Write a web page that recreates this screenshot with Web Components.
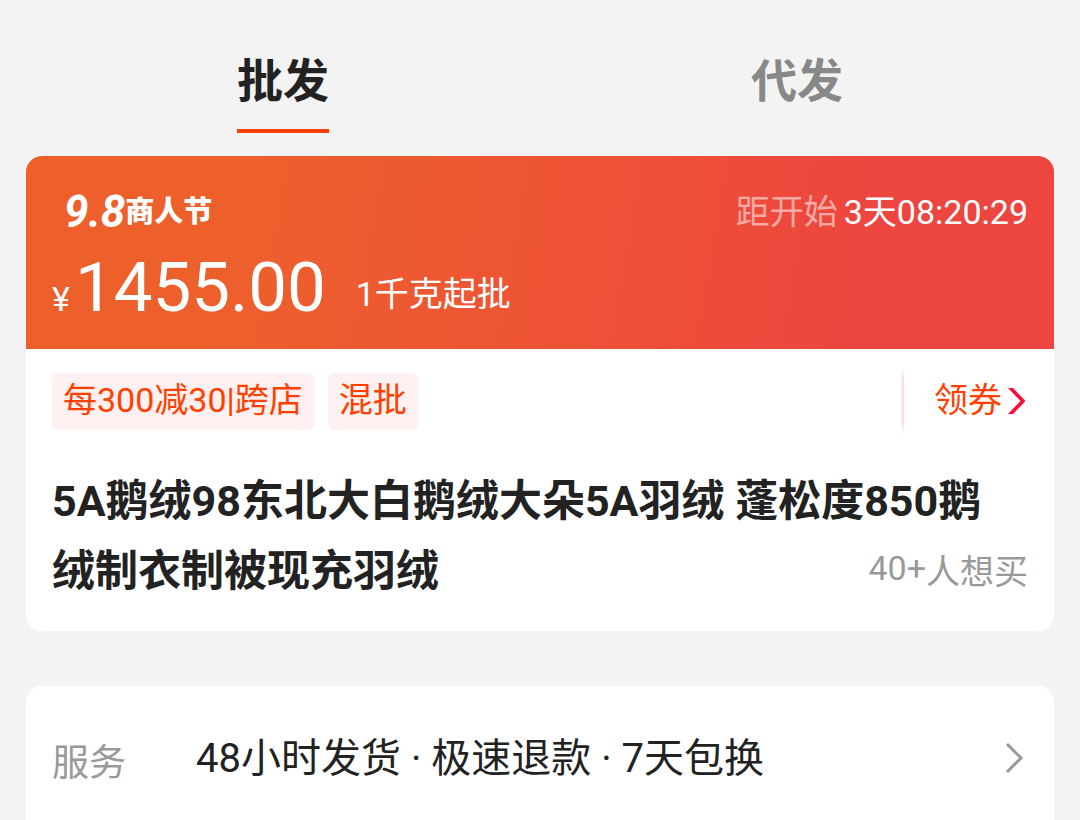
<!DOCTYPE html>
<html lang="zh-CN">
<head>
<meta charset="utf-8">
<meta name="viewport" content="width=device-width, initial-scale=1">
<title>商品详情</title>
<style>
  body { margin: 0; background: #f3f3f3; color: #222; font-family: Roboto, "Noto Sans CJK SC", sans-serif; }
</style>
</head>
<body>
<product-page>
  <trade-tabs slot="tabs">
    <trade-tab active>批发</trade-tab>
    <trade-tab>代发</trade-tab>
  </trade-tabs>
  <offer-card slot="offer">
    <price-banner slot="banner">
      <promo-logo slot="logo"><span slot="date">9.8</span>商人节</promo-logo>
      <count-down slot="timer" label="距开始">3天08:20:29</count-down>
      <span slot="price">1455.00</span>
      <span slot="minimum">1千克起批</span>
    </price-banner>
    <promo-tag slot="tags">每300减30|跨店</promo-tag>
    <promo-tag slot="tags">混批</promo-tag>
    <coupon-link slot="coupon">领券</coupon-link>
    <span slot="title">5A鹅绒98东北大白鹅绒大朵5A羽绒 蓬松度850鹅绒制衣制被现充羽绒</span>
    <want-count slot="want" count="40+">人想买</want-count>
  </offer-card>
  <service-row slot="service" label="服务">48小时发货 · 极速退款 · 7天包换</service-row>
</product-page>

<script>
  const define = (name, html) => customElements.define(name, class extends HTMLElement {
    constructor() {
      super();
      const template = document.createElement('template');
      template.innerHTML = html;
      this.attachShadow({ mode: 'open' }).append(template.content.cloneNode(true));
      for (const node of this.shadowRoot.querySelectorAll('[data-attr]')) {
        node.textContent = this.getAttribute(node.dataset.attr);
      }
    }
  });

  define('product-page', `
    <style>
      :host { display: block; }
      main { display: flex; flex-direction: column; box-sizing: border-box; min-height: 100vh; padding: 0 26px; }
      .service { flex: 1; display: flex; margin-top: 55px; }
      .service ::slotted(*) { flex: 1; }
    </style>
    <main>
      <slot name="tabs"></slot>
      <slot name="offer"></slot>
      <div class="service"><slot name="service"></slot></div>
    </main>`);

  define('trade-tabs', `
    <style>
      :host { display: block; }
      nav { display: grid; grid-template-columns: 1fr 1fr; justify-items: center; padding: 51px 0 23px; }
    </style>
    <nav><slot></slot></nav>`);

  define('trade-tab', `
    <style>
      :host { display: block; }
      button { display: block; border: 0; border-bottom: 4px solid transparent; padding: 0 0 18px; background: none;
        font: bold 46px/60px Roboto, "Noto Sans CJK SC", sans-serif; color: #888; cursor: pointer; }
      :host([active]) button { color: #222; border-color: #ff4000; }
    </style>
    <button type="button"><slot></slot></button>`);

  define('offer-card', `
    <style>
      :host { display: block; background: #fff; border-radius: 16px; overflow: hidden; }
      .promos { display: flex; align-items: center; gap: 14px; padding: 17px 26px 0; }
      .coupon { margin-left: auto; }
      .heading { display: flow-root; padding: 30px 26px 25px; }
      /* Keeps the want count beside the title's second line. */
      .heading::before { content: ""; float: right; width: 20px; height: 82px; }
      .want { float: right; clear: right; }
      h1 { margin: 0; font-size: 43px; line-height: 70px; font-weight: bold; }
    </style>
    <slot name="banner"></slot>
    <div class="promos"><slot name="tags"></slot><div class="coupon"><slot name="coupon"></slot></div></div>
    <div class="heading">
      <div class="want"><slot name="want"></slot></div>
      <h1><slot name="title"></slot></h1>
    </div>`);

  define('price-banner', `
    <style>
      :host { display: block; padding: 32px 26px 21px; color: #fff;
        background: linear-gradient(100deg, #ed602c 20%, #ed5235 54%, #ed4540 82%); }
      .top { display: flex; justify-content: space-between; align-items: center; }
      .bottom { display: flex; align-items: flex-end; gap: 30px; margin-top: 12px; }
      .price { display: flex; align-items: baseline; gap: 5px; font-size: 69px; line-height: 80px; }
      .unit { font-size: 34px; line-height: 40px; }
      .minimum { font-size: 34px; line-height: 68px; }
    </style>
    <div class="top"><slot name="logo"></slot><slot name="timer"></slot></div>
    <div class="bottom">
      <div class="price"><span class="unit">¥</span><slot name="price"></slot></div>
      <div class="minimum"><slot name="minimum"></slot></div>
    </div>`);

  define('promo-logo', `
    <style>
      :host { display: flex; align-items: center; padding-left: 12px; font-size: 29px; line-height: 44px; font-weight: 900; }
      .date { font-size: 44px; font-style: italic; font-weight: bold; }
    </style>
    <span class="date"><slot name="date"></slot></span><span><slot></slot></span>`);

  define('count-down', `
    <style>
      :host { display: flex; gap: 6px; font-size: 34px; line-height: 48px; }
      .label { color: rgba(255, 255, 255, .55); }
    </style>
    <span class="label" data-attr="label"></span><time><slot></slot></time>`);

  define('promo-tag', `
    <style>
      :host { display: block; padding: 0 11px 3px; border-radius: 6px; background: #fff1f1; color: #ff4000;
        font-size: 34px; line-height: 54px; }
    </style>
    <slot></slot>`);

  define('coupon-link', `
    <style>
      :host { display: flex; align-items: center; gap: 30px; }
      .edge { width: 4px; height: 70px; background: linear-gradient(to left, #f5d6d8, #fff);
        mask-image: linear-gradient(transparent, #000 20%, #000 80%, transparent); }
      a { display: flex; align-items: center; gap: 6px; padding-right: 2px; color: #ff4000; text-decoration: none;
        font-size: 34px; line-height: 54px; }
      span { padding-bottom: 3px; }
      svg { display: block; width: 18px; height: 26px; }
    </style>
    <div class="edge"></div>
    <a href="#coupon"><span><slot></slot></span>
      <svg viewBox="0 0 18 26" aria-hidden="true"><path d="M0 0H5L17 12.5V13.5L5 26H0L12.5 13Z" fill="#ff0a38"/></svg>
    </a>`);

  define('want-count', `
    <style>
      :host { display: flex; align-items: flex-start; font-size: 34px; line-height: 48px; color: #999; }
      .count { line-height: 40px; }
    </style>
    <span class="count" data-attr="count"></span><span><slot></slot></span>`);

  define('service-row', `
    <style>
      :host { display: block; background: #fff; border-radius: 16px 16px 0 0; }
      a { display: flex; align-items: flex-end; padding: 45px 30px 34px 26px; color: #222; text-decoration: none; }
      .label { flex: 0 0 144px; color: #999; font-size: 37px; line-height: 46px; }
      .value { flex: 1; font-size: 40px; line-height: 56px; }
      svg { display: block; align-self: center; width: 20px; height: 32px; }
    </style>
    <a href="#service">
      <span class="label" data-attr="label"></span>
      <span class="value"><slot></slot></span>
      <svg viewBox="0 0 20 32" aria-hidden="true"><path d="M3 1L17 15L3 29" fill="none" stroke="#999" stroke-width="3"/></svg>
    </a>`);
</script>
</body>
</html>
